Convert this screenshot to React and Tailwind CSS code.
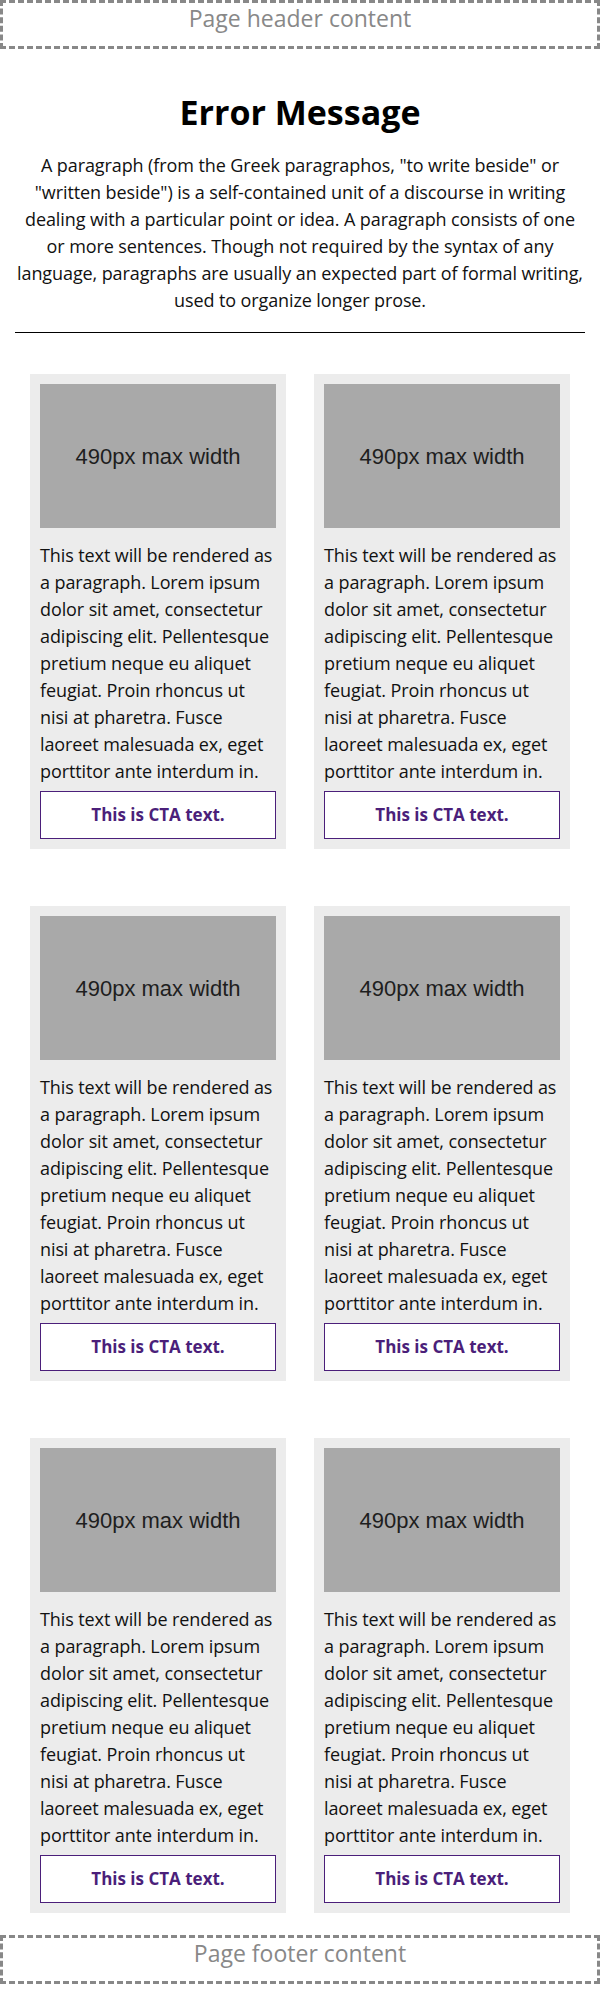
import React from 'react';

const CARD_TEXT =
  'This text will be rendered as a paragraph. Lorem ipsum dolor sit amet, consectetur adipiscing elit. Pellentesque pretium neque eu aliquet feugiat. Proin rhoncus ut nisi at pharetra. Fusce laoreet malesuada ex, eget porttitor ante interdum in.';

function Card() {
  return (
    <div className="bg-[#ececec] p-[10px]">
      <div className="flex h-[144px] items-center justify-center bg-[#a9a9a9] font-['Liberation_Sans',Arial,sans-serif] text-[22px] text-[#1e1e1e]">
        490px max width
      </div>
      <p className="mt-[14px] text-[18px] leading-[27px] tracking-[-0.1px] text-[#111]">{CARD_TEXT}</p>
      <a
        href="#"
        className="mt-[6px] flex h-[48px] items-center justify-center border border-[#4b1f7a] bg-white text-[17px] font-bold text-[#4b1f7a]"
      >
        This is CTA text.
      </a>
    </div>
  );
}

export default function App() {
  return (
    <div className="bg-white pb-[6px] font-['Open_Sans','Noto_Sans',sans-serif] text-black">
      <header className="h-[49px] border-[3px] border-dashed border-[#888] text-center text-[23px] leading-[31px] text-[#888]">
        Page header content
      </header>

      <main>
        <h1 className="mt-[43px] text-center text-[34px] font-bold leading-[40px]">Error Message</h1>
        <p className="mx-[15px] mt-[20px] text-center text-[18px] leading-[27px] tracking-[-0.1px] text-[#111]">
          A paragraph (from the Greek paragraphos, "to write beside" or "written beside") is a self-contained unit
          of a discourse in writing dealing with a particular point or idea. A paragraph consists of one or more
          sentences. Though not required by the syntax of any language, paragraphs are usually an expected part of
          formal writing, used to organize longer prose.
        </p>
        <hr className="mx-[15px] mt-[18px] border-t border-black" />

        <div className="mt-[41px] grid grid-cols-2 gap-x-[28px] gap-y-[57px] px-[30px]">
          {Array.from({ length: 6 }).map((_, i) => (
            <Card key={i} />
          ))}
        </div>
      </main>

      <footer className="mt-[22px] h-[49px] border-[3px] border-dashed border-[#888] text-center text-[23px] leading-[31px] text-[#888]">
        Page footer content
      </footer>
    </div>
  );
}
